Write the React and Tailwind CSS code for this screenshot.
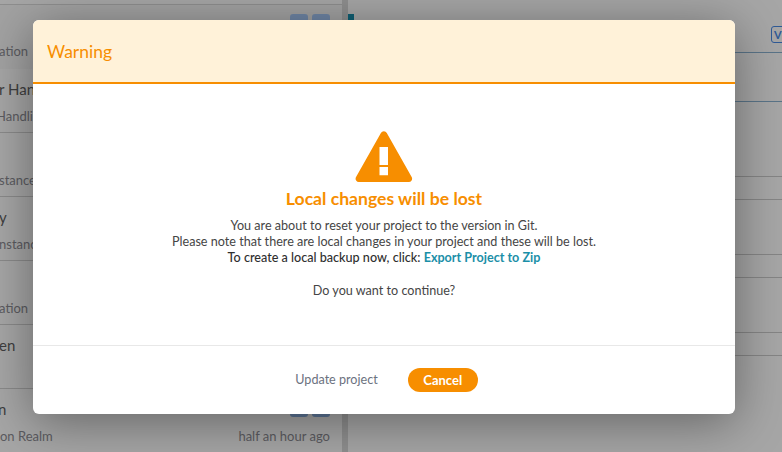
import React from "react";

const font = { fontFamily: '"Lato", "Liberation Sans", sans-serif' };

const rows = [
  { title: "r Han", sub: "Handlin", titleInset: "-ml-px", subInset: "-ml-[4px]" },
  { title: "", sub: "stance", subInset: "-ml-px" },
  { title: "y", sub: "nstanc", titleInset: "-ml-px", subInset: "-ml-px" },
  { title: "", sub: "ation", subInset: "-ml-px" },
  { title: "en", sub: "", titleInset: "-ml-px" },
  { title: "n", sub: "on Realm", time: "half an hour ago", titleInset: "-ml-[2px]", buttons: true },
];

const RowButtons = () => (
  <div className="flex gap-1 justify-end h-[18px] -mb-[16px] -mt-[2px]">
    <div className="w-[18px] rounded-[3px] bg-[#5c7596]"></div>
    <div className="w-[18px] rounded-[3px] bg-[#5c7596]"></div>
  </div>
);

const ProjectRow = ({ row }) => (
  <div className="h-[64px] border-b border-[#8a8a8a] pr-3 pt-3 flex flex-col">
    {row.buttons && <RowButtons />}
    <div className={`h-4 text-[15px] leading-4 text-[#3e3e3e] ${row.titleInset || ""}`}>{row.title}</div>
    <div className="flex justify-between mt-[11px] text-[13px] leading-4 text-[#5b5b60]">
      <span className={row.subInset || ""}>{row.sub}</span>
      {row.time && <span>{row.time}</span>}
    </div>
  </div>
);

const LeftPanel = () => (
  <div className="w-[342px] shrink-0 overflow-hidden">
    <div className="h-[65px] bg-[#a2a2a2] border-t border-[#8e8e8e] mt-1 pr-3">
      <div className="flex gap-1 justify-end h-[18px] mt-[9px]">
        <div className="w-[18px] rounded-[3px] bg-[#6f86a6]"></div>
        <div className="w-[18px] rounded-[3px] bg-[#6f86a6]"></div>
      </div>
      <div className="text-[13px] leading-4 text-[#5b5b60] -ml-px mt-[11px]">ation</div>
    </div>
    {rows.map((row, i) => (
      <ProjectRow key={i} row={row} />
    ))}
  </div>
);

const RightPanel = () => (
  <div className="flex-1 min-w-0 overflow-hidden">
    <div className="h-[138px] bg-[#a6a6a6] pt-[14px]">
      <div className="w-[6px] h-[18px] bg-[#0f5f73] -mb-[18px]"></div>
      <div className="flex justify-end h-[39px] border-b border-[#5a7488]">
        <div className="w-[14px] h-[17px] mt-3 -mr-[3px] rounded-[3px] border border-[#2f5a96] text-[11px] leading-[15px] font-bold text-[#2f5a96] pl-[2px]">V</div>
      </div>
      <div className="h-[49px] border-b border-[#5a7488]"></div>
    </div>
    <div className="h-[39px] border-b border-[#858585]"></div>
    <div className="h-[23px] border-b border-[#858585]"></div>
    <div className="h-[55px] border-b border-[#858585]"></div>
    <div className="h-[23px] border-b border-[#858585]"></div>
    <div className="h-[55px] border-b border-[#858585]"></div>
    <div className="h-[23px] border-b border-[#858585]"></div>
  </div>
);

const WarningIcon = () => (
  <svg width="58" height="52" viewBox="0 0 58 52" className="block">
    <path
      fill="#f78e00"
      fillRule="evenodd"
      d="M25.9 1.9a3.4 3.4 0 0 1 5.900 0l25 44.300A3.400 3.400 0 0 1 53.800 51H3.900a3.400 3.400 0 0 1-3-4.800zM24.500 16v18h8.500V16zM24.500 36v8.300h8.500V36z"
    />
  </svg>
);

const WarningModal = () => (
  <div className="absolute inset-0 pt-5 pl-[33px]">
    <div className="w-[702px] h-[394px] bg-white rounded-[6px] overflow-hidden shadow-[0_8px_50px_rgba(0,0,0,0.4)] flex flex-col">
      <div className="h-[64px] shrink-0 bg-[#fff2d9] border-b-2 border-[#f78e00] px-[14px] pt-[21px] text-[17.5px] leading-[22px] text-[#f78e00]">
        Warning
      </div>
      <div className="h-[262px] shrink-0 border-b border-[#e8e8e8] flex flex-col items-center pt-[47px]">
        <WarningIcon />
        <h2 className="mt-[4px] text-[17.6px] leading-[24px] font-bold text-[#f78e00]">Local changes will be lost</h2>
        <div className="mt-[7px] text-center text-[12.6px] leading-4 text-[#454545]">
          <p>You are about to reset your project to the version in Git.</p>
          <p>Please note that there are local changes in your project and these will be lost.</p>
          <p className="font-medium text-[#2f2f2f]">
            To create a local backup now, click: <a className="font-bold text-[#1b8fa8]">Export Project to Zip</a>
          </p>
          <p className="mt-4 pt-px">Do you want to continue?</p>
        </div>
      </div>
      <div className="flex-1 flex items-start justify-center gap-[30px] pt-[22px] pl-[5px]">
        <button className="h-6 pt-px text-[12.6px] text-[#6c7280]">Update project</button>
        <button className="w-[70px] h-6 pt-px rounded-full bg-[#f78e00] text-[13px] font-bold text-white">Cancel</button>
      </div>
    </div>
  </div>
);

export default function App() {
  return (
    <div className="relative h-screen overflow-hidden bg-[#a6a6a6]" style={font}>
      <div className="flex h-full">
        <LeftPanel />
        <div className="w-[6px] shrink-0 bg-[#8f8f8f]"></div>
        <RightPanel />
      </div>
      <WarningModal />
    </div>
  );
}
